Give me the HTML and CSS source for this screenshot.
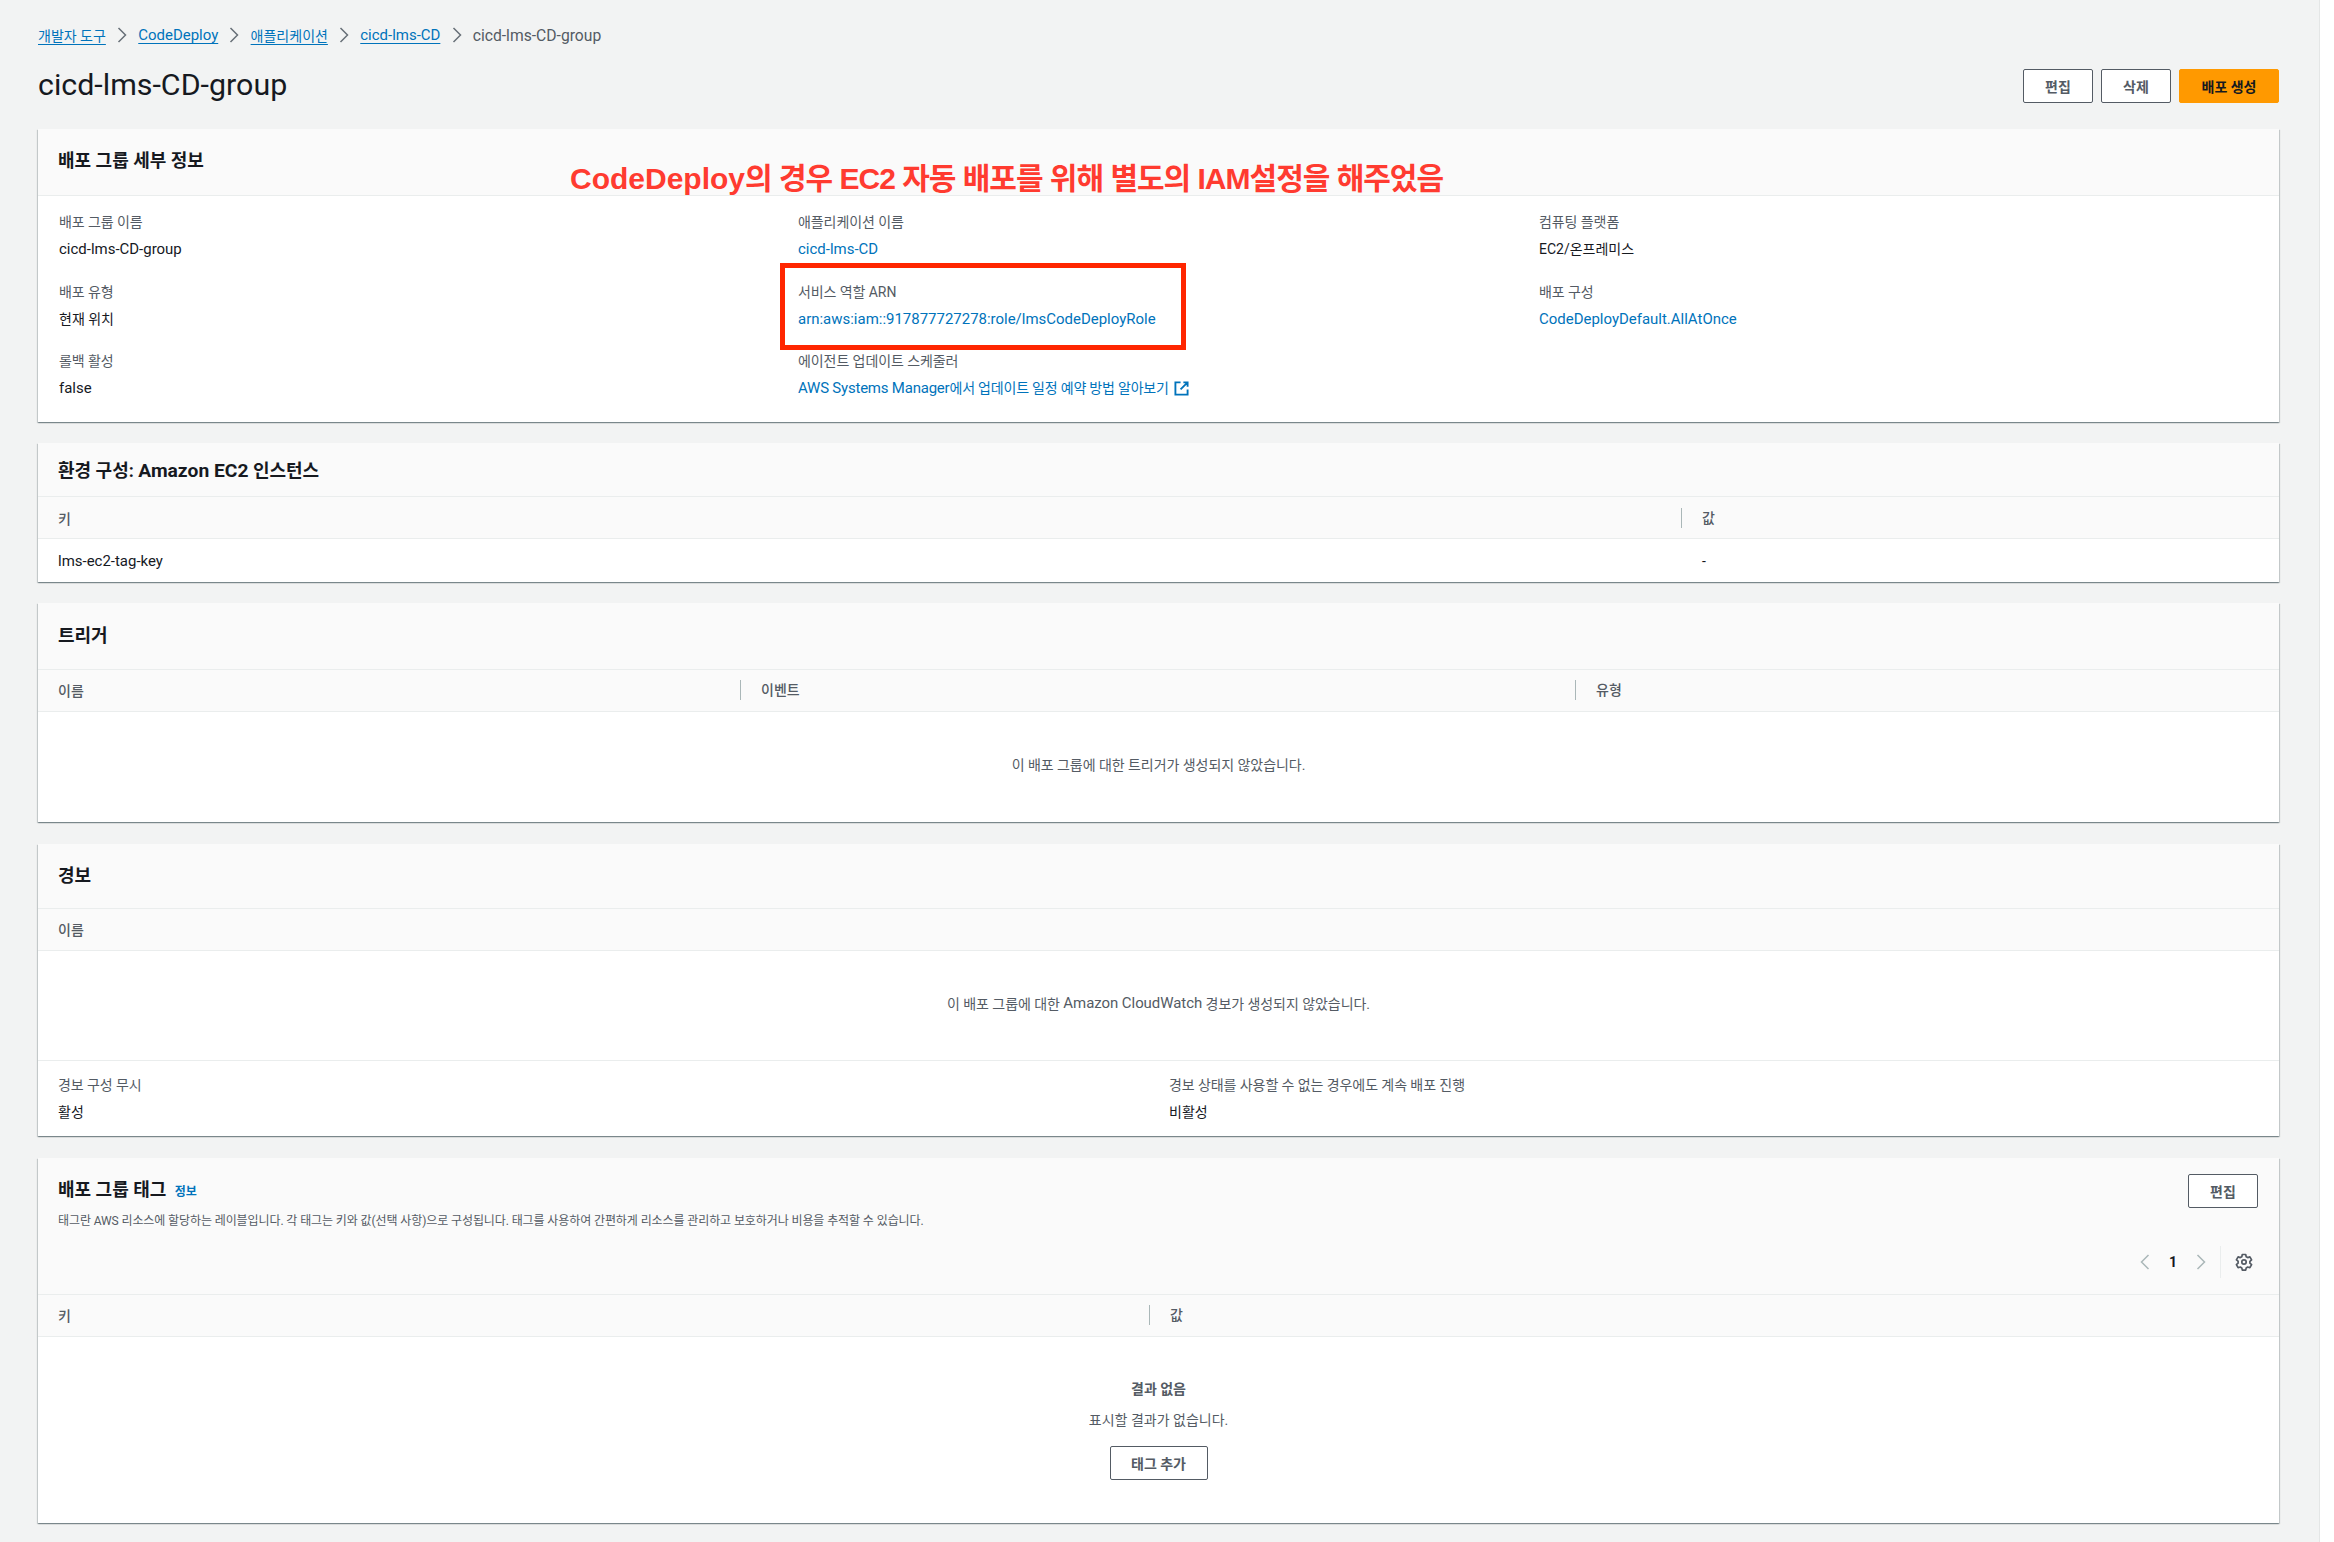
FILE: index.html
```html
<!DOCTYPE html>
<html lang="ko">
<head>
<meta charset="utf-8">
<title>cicd-lms-CD-group</title>
<link rel="stylesheet" href="styles.css">
</head>
<body>
<main class="page">
  <nav class="crumbs">
    <a class="crumb-link">개발자 도구</a>
    <svg class="crumb-sep" viewBox="0 0 10 16"><path d="M1.5 1l7 7-7 7"/></svg>
    <a class="crumb-link lat">CodeDeploy</a>
    <svg class="crumb-sep" viewBox="0 0 10 16"><path d="M1.5 1l7 7-7 7"/></svg>
    <a class="crumb-link">애플리케이션</a>
    <svg class="crumb-sep" viewBox="0 0 10 16"><path d="M1.5 1l7 7-7 7"/></svg>
    <a class="crumb-link lat">cicd-lms-CD</a>
    <svg class="crumb-sep" viewBox="0 0 10 16"><path d="M1.5 1l7 7-7 7"/></svg>
    <span class="crumb-current">cicd-lms-CD-group</span>
  </nav>

  <header class="page-head">
    <h1 class="page-title">cicd-lms-CD-group</h1>
    <div class="actions">
      <button class="btn">편집</button>
      <button class="btn">삭제</button>
      <button class="btn btn-primary">배포 생성</button>
    </div>
  </header>

  <section class="card card-details">
    <div class="card-head head-67"><h2 class="card-title">배포 그룹 세부 정보</h2></div>
    <div class="details">
      <div class="field"><div class="label">배포 그룹 이름</div><div class="value lat">cicd-lms-CD-group</div></div>
      <div class="field"><div class="label">애플리케이션 이름</div><div class="value lat"><a class="link">cicd-lms-CD</a></div></div>
      <div class="field"><div class="label">컴퓨팅 플랫폼</div><div class="value">EC2/온프레미스</div></div>
      <div class="field"><div class="label">배포 유형</div><div class="value">현재 위치</div></div>
      <div class="field"><div class="label">서비스 역할 ARN</div><div class="value lat"><a class="link">arn:aws:iam::917877727278:role/lmsCodeDeployRole</a></div></div>
      <div class="field"><div class="label">배포 구성</div><div class="value lat"><a class="link">CodeDeployDefault.AllAtOnce</a></div></div>
      <div class="field"><div class="label">롤백 활성</div><div class="value lat">false</div></div>
      <div class="field"><div class="label">에이전트 업데이트 스케줄러</div><div class="value"><a class="link link-mixed"><span class="lat">AWS Systems Manager</span>에서 업데이트 일정 예약 방법 알아보기</a><svg class="ext" viewBox="0 0 16 16"><path d="M7 1.500H1.500v13h13V9M10 1.500h4.500V6M14.500 1.500L7 9"/></svg></div></div>
    </div>
    <div class="annotation-text">CodeDeploy<span class="anno-ko">의 경우 EC2 자동 배포를 위해 별도의 IAM설정을 해주었음</span></div>
    <div class="annotation-box"></div>
  </section>

  <section class="card">
    <div class="card-head head-54"><h2 class="card-title">환경 구성: <span class="lat">Amazon EC2</span> 인스턴스</h2></div>
    <div class="thead thead-low cols-env"><div class="th">키</div><div class="th th-sep">값</div></div>
    <div class="trow cols-env"><div class="td lat">lms-ec2-tag-key</div><div class="td td-sep">-</div></div>
  </section>

  <section class="card card-gap">
    <div class="card-head head-67"><h2 class="card-title">트리거</h2></div>
    <div class="thead thead-high cols-trig"><div class="th">이름</div><div class="th th-sep">이벤트</div><div class="th th-sep">유형</div></div>
    <div class="empty empty-trig">이 배포 그룹에 대한 트리거가 생성되지 않았습니다.</div>
  </section>

  <section class="card card-gap">
    <div class="card-head head-65"><h2 class="card-title">경보</h2></div>
    <div class="thead thead-high"><div class="th">이름</div></div>
    <div class="empty empty-alarm">이 배포 그룹에 대한&nbsp;<span class="lat">Amazon CloudWatch</span>&nbsp;경보가 생성되지 않았습니다.</div>
    <div class="alarm-foot">
      <div class="field"><div class="label">경보 구성 무시</div><div class="value">활성</div></div>
      <div class="field"><div class="label">경보 상태를 사용할 수 없는 경우에도 계속 배포 진행</div><div class="value">비활성</div></div>
    </div>
  </section>

  <section class="card">
    <div class="tags-head">
      <div class="tags-top">
        <div class="tags-intro">
          <h2 class="card-title">배포 그룹 태그 <a class="info">정보</a></h2>
          <p class="desc">태그란 AWS 리소스에 할당하는 레이블입니다. 각 태그는 키와 값(선택 사항)으로 구성됩니다. 태그를 사용하여 간편하게 리소스를 관리하고 보호하거나 비용을 추적할 수 있습니다.</p>
        </div>
        <button class="btn btn-small">편집</button>
      </div>
      <div class="pager">
        <svg class="pg-arrow" viewBox="0 0 10 16"><path d="M8.500 1l-7 7 7 7"/></svg>
        <span class="pg-num">1</span>
        <svg class="pg-arrow" viewBox="0 0 10 16"><path d="M1.500 1l7 7-7 7"/></svg>
        <span class="pg-sep"></span>
        <svg class="gear" viewBox="0 0 18 18"><path d="M7.300 1.500h3.400l.5 2.200 1.500.9 2.200-.7 1.700 3-1.700 1.500v1.800l1.700 1.500-1.700 3-2.200-.7-1.500.9-.5 2.200H7.300l-.5-2.200-1.500-.9-2.200.7-1.700-3 1.700-1.500V8.100L1.400 6.900l1.700-3 2.200.7 1.500-.9z"/><circle cx="9" cy="9" r="2.200"/></svg>
      </div>
    </div>
    <div class="thead thead-high cols-tags"><div class="th">키</div><div class="th th-sep">값</div></div>
    <div class="no-result">
      <div class="nr-title">결과 없음</div>
      <div class="nr-text">표시할 결과가 없습니다.</div>
      <button class="btn btn-add">태그 추가</button>
    </div>
  </section>
</main>
</body>
</html>
```

FILE: styles.css
```css
* { box-sizing: border-box; }
html, body { margin: 0; padding: 0; }
body {
  background: #fff;
  font-family: "Roboto", "Noto Sans CJK KR", sans-serif;
  font-size: 14px;
  color: #16191f;
}
.lat { font-size: 1.07em; }
.page {
  width: 2320px;
  min-height: 1542px;
  background: #f2f3f3;
  border-right: 1px solid #e4e6e6;
  padding: 24px 40px 0 38px;
}
.crumbs { display: flex; align-items: center; height: 22px; font-size: 14px; }
.crumb-link { color: #0073bb; text-decoration: underline; text-underline-offset: 3px; }
.crumb-current { color: #545b64; font-size: 1.12em; }
.crumb-sep { width: 10px; height: 16px; margin: 0 11.2px; fill: none; stroke: #687078; stroke-width: 1.5; }
.page-head { display: flex; justify-content: space-between; align-items: center; margin-top: 22px; height: 36px; }
.page-title { margin: -2px 0 0; font-size: 30.4px; font-weight: 400; line-height: 36px; }
.actions { display: flex; gap: 8px; }
.btn {
  font: 700 14px "Roboto", "Noto Sans CJK KR", sans-serif;
  color: #545b64;
  background: #fff;
  border: 1px solid #545b64;
  border-radius: 2px;
  width: 70px;
  height: 34px;
  padding: 0 0 1px;
}
.btn-primary { width: 100px; background: #ff9900; border-color: #ff9900; color: #16191f; }
.btn-small { margin: 0 21px 0 0; flex: none; }
.btn-add { width: 98px; margin-top: 15px; }
.card {
  position: relative;
  background: #fff;
  margin-bottom: 21px;
  box-shadow: 0 1px 1px 0 rgba(0,28,36,.3), 1px 1px 1px 0 rgba(0,28,36,.15), -1px 1px 1px 0 rgba(0,28,36,.15);
}
.card-gap { margin-bottom: 22px; }
.page-head + .card { margin-top: 25px; }
.card-head {
  display: flex;
  align-items: center;
  padding: 0 20px;
  background: #fafafa;
  border-bottom: 1px solid #eaeded;
}
.head-67 { height: 67px; }
.head-65 { height: 65px; padding-bottom: 1px; }
.head-54 { height: 54px; padding-top: 2px; }
.card-details .card-head { padding-bottom: 2px; }
.card-title { margin: 0; font-size: 18px; font-weight: 700; line-height: 24px; }
.details {
  display: grid;
  grid-template-columns: 739px 741px 1fr;
  align-content: start;
  padding: 13px 21px 0;
  height: 226px;
}
.field { height: 69.5px; }
.label { color: #545b64; line-height: 26px; letter-spacing: -0.08px; }
.value { line-height: 22px; margin-top: 3px; display: flex; align-items: center; }
.link { color: #0073bb; }
.link-mixed { letter-spacing: -0.2px; }
.ext { width: 15px; height: 15px; margin-left: 5px; fill: none; stroke: #0073bb; stroke-width: 2; }
.thead {
  display: grid;
  align-items: center;
  height: 42px;
  background: #fafafa;
  border-bottom: 1px solid #eaeded;
  padding: 0 0 0 20px;
}
.thead-low { padding-top: 1px; }
.thead-high { padding-bottom: 2px; }
.th { font-weight: 500; color: #545b64; font-size: 14px; }
.th-sep { border-left: 1px solid #aab7b8; padding-left: 20px; line-height: 20px; }
.cols-env { grid-template-columns: 1623px 1fr; }
.cols-trig { grid-template-columns: 682px 835px 1fr; }
.cols-tags { grid-template-columns: 1091px 1fr; }
.trow { display: grid; align-items: center; height: 43px; padding-left: 20px; }
.td-sep { padding-left: 21px; }
.empty { display: flex; align-items: center; justify-content: center; color: #545b64; letter-spacing: -0.05px; }
.empty-trig { height: 110px; padding-bottom: 6px; }
.empty-alarm { height: 110px; padding-bottom: 5px; border-bottom: 1px solid #eaeded; }
.alarm-foot { display: grid; grid-template-columns: 1111px 1fr; padding: 11px 20px 0; height: 75px; }
.tags-head { background: #fafafa; height: 137px; border-bottom: 1px solid #eaeded; padding-top: 16px; }
.tags-top { display: flex; justify-content: space-between; height: 69px; }
.tags-intro { padding: 4px 0 0 20px; }
.info { font-size: 12px; font-weight: 700; color: #0073bb; margin-left: 4px; }
.desc { margin: 8px 0 0; font-size: 12px; line-height: 18px; color: #545b64; letter-spacing: -0.1px; }
.pager { display: flex; align-items: center; justify-content: flex-end; height: 34px; padding-right: 26px; margin-top: 2px; }
.pg-arrow { width: 10px; height: 16px; fill: none; stroke: #aab7b8; stroke-width: 1.5; }
.pg-num { width: 46px; text-align: center; font-weight: 700; }
.pg-sep { width: 1px; height: 32px; background: #eaeded; margin: 0 14px 0 14px; }
.gear { width: 18px; height: 18px; fill: none; stroke: #545b64; stroke-width: 1.7; stroke-linejoin: round; }
.no-result { display: flex; flex-direction: column; align-items: center; height: 186px; padding-top: 41px; }
.nr-title { font-weight: 700; color: #545b64; line-height: 22px; }
.nr-text { color: #545b64; line-height: 22px; margin-top: 9px; }
.annotation-text {
  position: absolute;
  left: 532px;
  top: 30px;
  font: 700 30px/40px "Liberation Sans", "Noto Sans CJK KR", sans-serif;
  color: #ff3b30;
  white-space: nowrap;
}
.anno-ko { letter-spacing: -1px; }
.annotation-box {
  position: absolute;
  left: 742px;
  top: 134px;
  width: 406px;
  height: 87px;
  border: 5px solid #ff2600;
}
```
